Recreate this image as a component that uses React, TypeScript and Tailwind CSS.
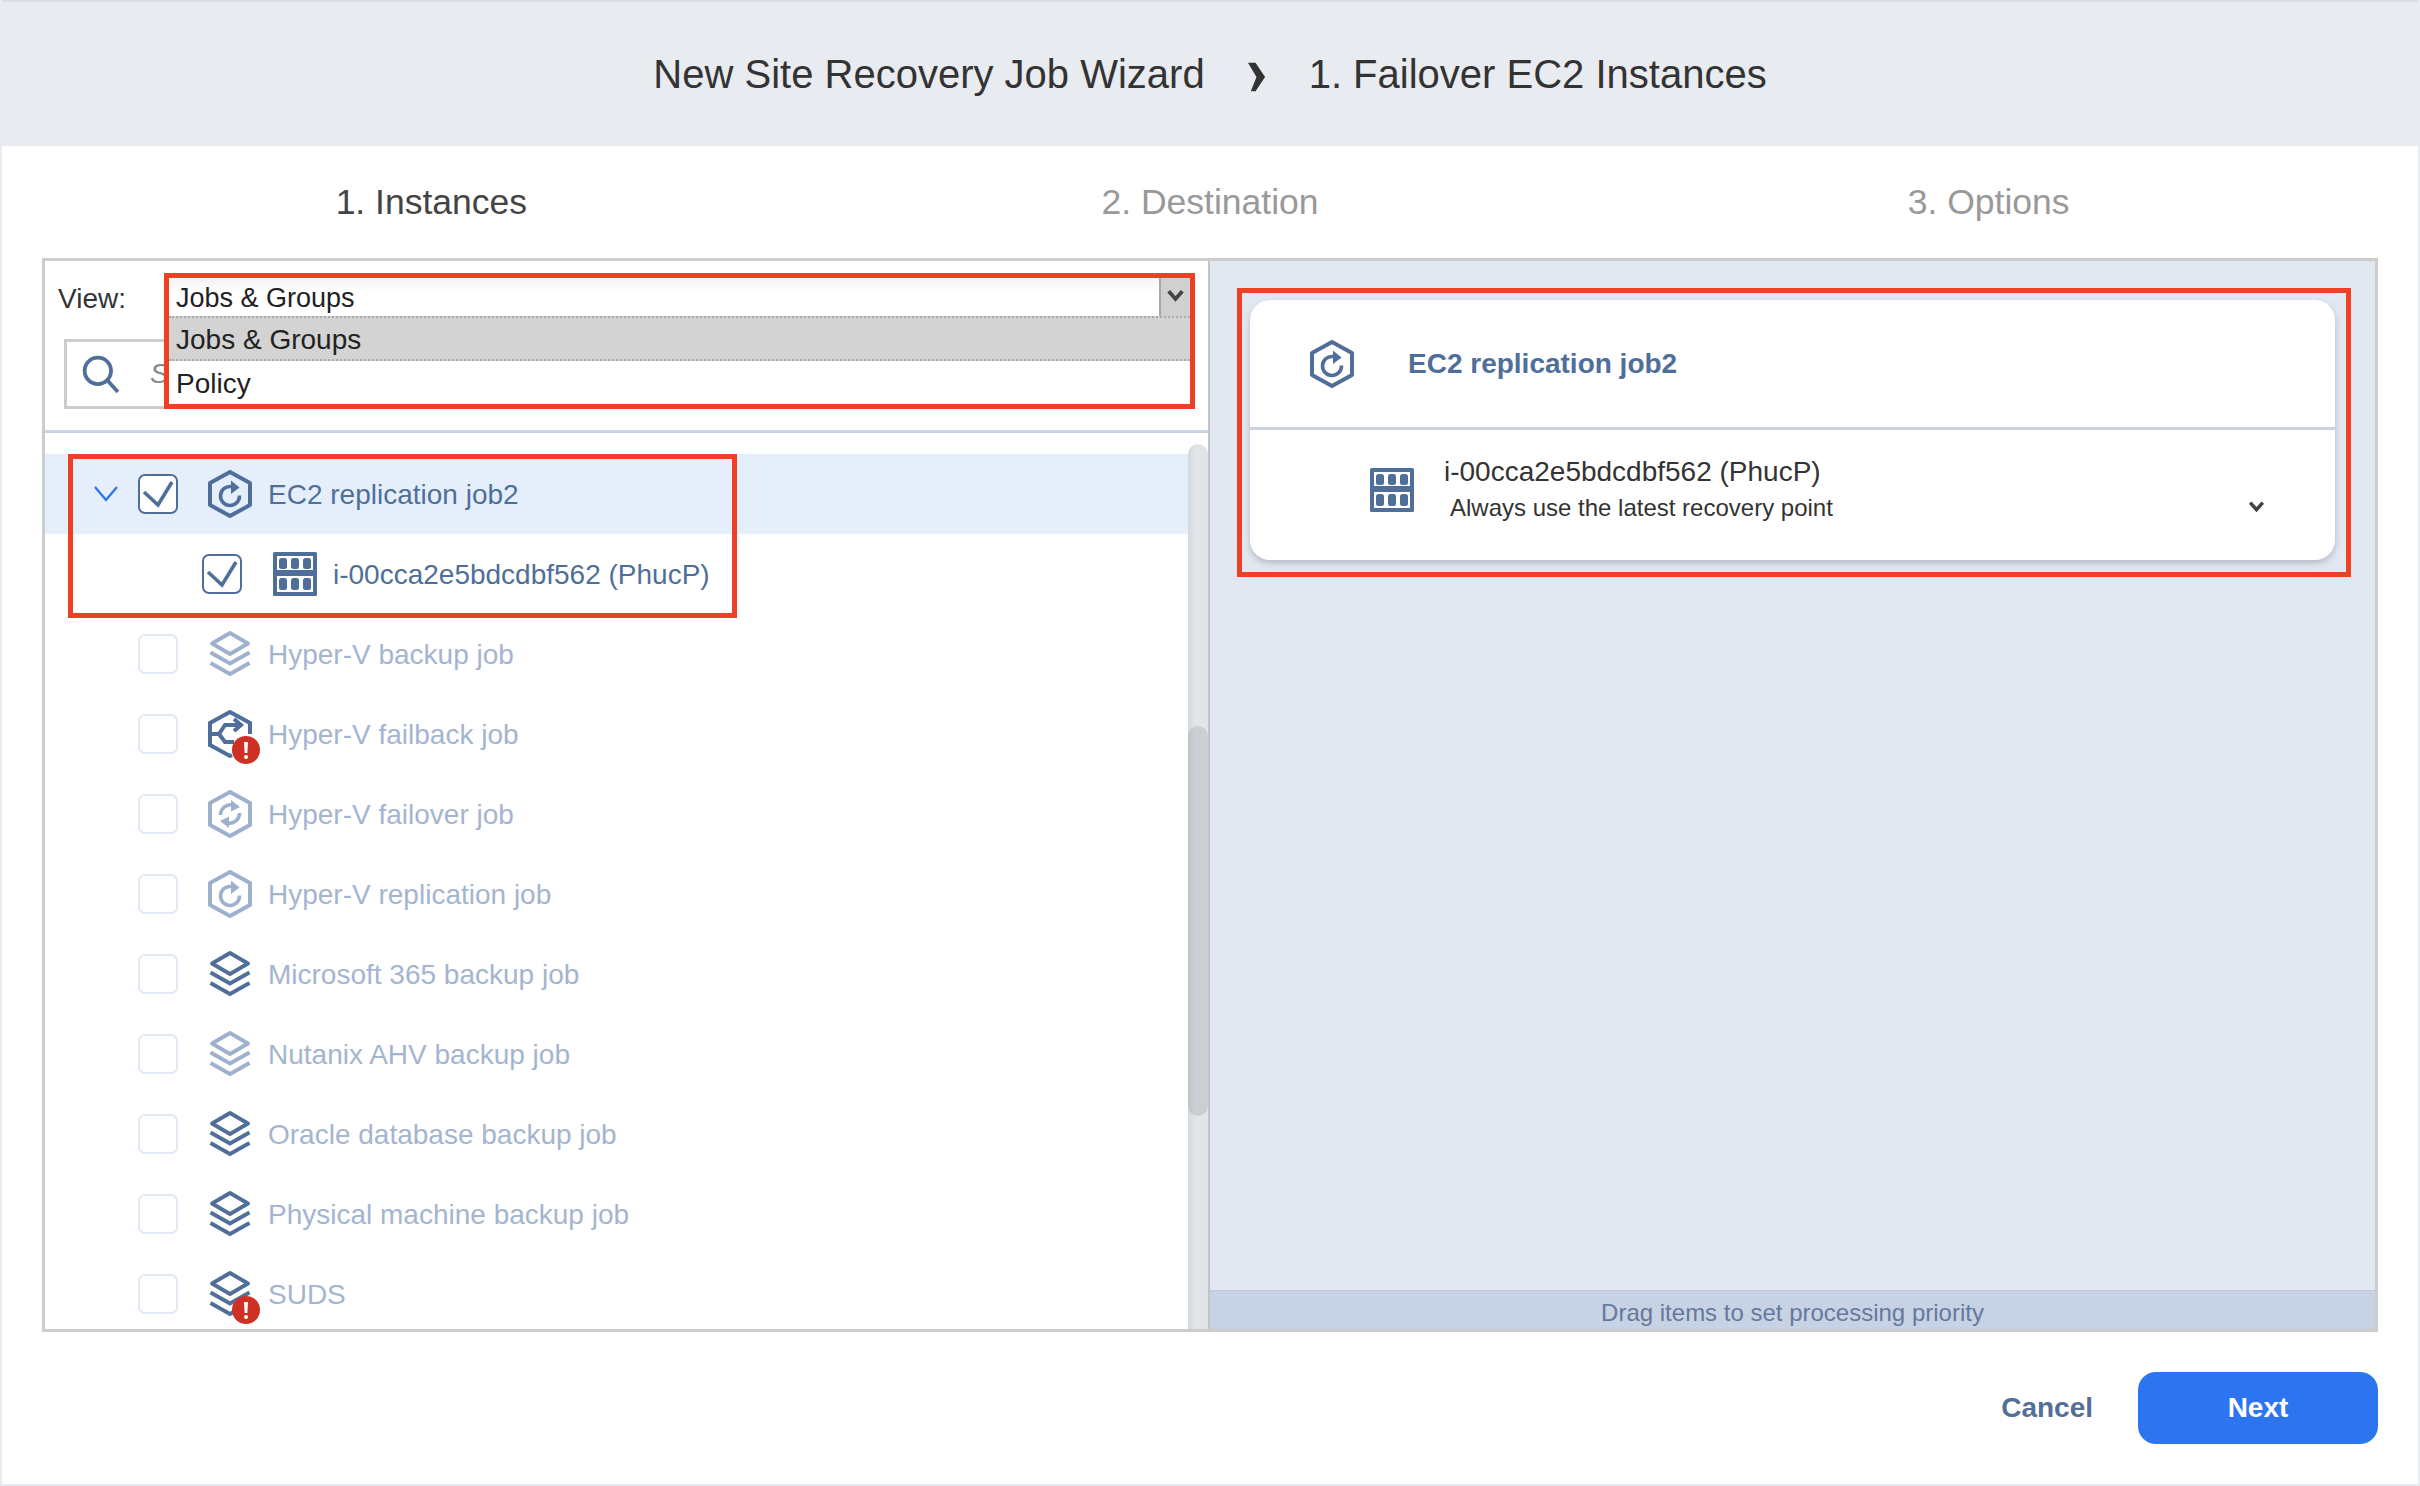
const DARK = "#4f6f9a";
const LIGHT = "#9db1cf";

type IconKind = "stack" | "replication" | "failover" | "failback";

type Job = { name: string; icon: IconKind; dim: boolean; alert?: boolean };

const JOBS: Job[] = [
  { name: "Hyper-V backup job", icon: "stack", dim: true },
  { name: "Hyper-V failback job", icon: "failback", dim: false, alert: true },
  { name: "Hyper-V failover job", icon: "failover", dim: true },
  { name: "Hyper-V replication job", icon: "replication", dim: true },
  { name: "Microsoft 365 backup job", icon: "stack", dim: false },
  { name: "Nutanix AHV backup job", icon: "stack", dim: true },
  { name: "Oracle database backup job", icon: "stack", dim: false },
  { name: "Physical machine backup job", icon: "stack", dim: false },
  { name: "SUDS", icon: "stack", dim: false, alert: true },
];

function JobIcon({ kind, color }: { kind: IconKind; color: string }) {
  if (kind === "stack") {
    return (
      <svg viewBox="0 0 44 48" className="h-[48px] w-[44px]" fill="none" stroke={color} strokeWidth="3.8">
        <path d="M22 3 L40 13.5 L22 24 L4 13.5 Z" strokeLinejoin="round" />
        <path d="M2.5 22.5 L22 33.5 L41.5 22.5" />
        <path d="M2.5 33 L22 44 L41.5 33" />
      </svg>
    );
  }
  return (
    <svg viewBox="0 0 44 48" className="h-[48px] w-[44px]" fill="none" stroke={color} strokeWidth="4">
      {kind === "failback" ? (
        <>
          <path d="M24 45 L22 46 L2 35 V13 L22 2 L42 13 V24" />
          <path d="M2 24 H11 L17 15 H31" />
          <path d="M11 24 L17 32 H26" />
          <path d="M26 9 L33 15 L26 21" />
        </>
      ) : (
        <path d="M22 2 L42 13 V35 L22 46 L2 35 V13 Z" strokeLinejoin="round" />
      )}
      {kind === "replication" && (
        <>
          <path d="M23 16.5 A9.5 9.5 0 1 0 31.5 25.5" strokeWidth="3.6" />
          <path d="M23 10.5 L31.5 17.5 L23 24 Z" fill={color} stroke="none" />
        </>
      )}
      {kind === "failover" && (
        <>
          <path d="M12.5 25 A10 10 0 0 1 26 15.5" strokeWidth="3.6" />
          <path d="M23 10 L32 17 L23 21.5 Z" fill={color} stroke="none" />
          <path d="M31.5 23 A10 10 0 0 1 18 32.5" strokeWidth="3.6" />
          <path d="M21 38 L12 31 L21 26.5 Z" fill={color} stroke="none" />
        </>
      )}
    </svg>
  );
}

function ServerIcon() {
  return (
    <svg viewBox="0 0 44 44" className="h-[44px] w-[44px] shrink-0">
      <rect width="44" height="44" rx="1.5" fill={DARK} />
      <rect x="4" y="4" width="36" height="14" fill="#fff" />
      <rect x="4" y="24" width="36" height="16" fill="#fff" />
      {[6, 18, 30].map((x) => (
        <g key={x} fill={DARK}>
          <rect x={x} y="6" width="8" height="11" rx="2.5" />
          <rect x={x} y="26" width="8" height="12" rx="2.5" />
        </g>
      ))}
    </svg>
  );
}

function AlertBadge() {
  return (
    <span className="absolute left-[24px] top-[26px] flex h-[28px] w-[28px] items-center justify-center rounded-full bg-[#cf3024]">
      <svg viewBox="0 0 28 28" className="h-[28px] w-[28px]" fill="#fff">
        <path d="M12 6 H16 L15.3 17 H12.7 Z" />
        <circle cx="14" cy="21" r="2" />
      </svg>
    </span>
  );
}

function CheckBox({ checked }: { checked: boolean }) {
  if (!checked) {
    return <span className="block h-[40px] w-[40px] shrink-0 rounded-[7px] border-2 border-[#e2e8f4] bg-white" />;
  }
  return (
    <span className="flex h-[40px] w-[40px] shrink-0 items-center justify-center rounded-[7px] border-2 border-[#4f6f9a] bg-white">
      <svg viewBox="0 0 36 36" className="h-[36px] w-[36px]" fill="none" stroke={DARK} strokeWidth="3.6">
        <path d="M4 16 L18 29 L32 6" />
      </svg>
    </span>
  );
}

function JobRow({ job }: { job: Job }) {
  return (
    <div className="flex h-[80px] shrink-0 items-center pl-[93px]">
      <CheckBox checked={false} />
      <span className="relative ml-[30px] h-[48px] w-[44px] shrink-0">
        <JobIcon kind={job.icon} color={job.dim ? LIGHT : DARK} />
        {job.alert && <AlertBadge />}
      </span>
      <span className="ml-[16px] pt-[1px] text-[28px] text-[#a3b5d0]">{job.name}</span>
    </div>
  );
}

function Highlight({ className }: { className: string }) {
  return <div className={`pointer-events-none absolute border-[5px] border-[#ee4025] ${className}`} />;
}

function Chevron({ className }: { className: string }) {
  return (
    <svg viewBox="0 0 20 14" className={className} fill="none" stroke="currentColor" strokeWidth="4.5">
      <path d="M2 2 L10 11 L18 2" />
    </svg>
  );
}

export default function App() {
  return (
    <div className="flex h-[1486px] w-[2420px] flex-col border-x-2 border-b-2 border-x-[#e8ebf0] border-b-[#e8ebf0] bg-white font-['Liberation_Sans',Arial,sans-serif] text-[#333]">
      <header className="flex h-[146px] shrink-0 items-center justify-center border-t-2 border-[#dcdfe3] bg-[#e8ebf0] text-[40px] text-[#333]">
        <span>New Site Recovery Job Wizard</span>
        <svg viewBox="0 0 20 30" className="ml-[42px] mr-[43px] mt-[6px] h-[30px] w-[19px]" fill="#333">
          <path d="M1 0 H9 L19 15 L9 30 H4 L10 15 Z" />
        </svg>
        <span>1. Failover EC2 Instances</span>
      </header>

      <nav className="mx-[40px] flex h-[112px] shrink-0 items-center pt-[1px] text-[35.5px] text-[#999]">
        <div className="flex-1 text-center text-[#444]">1. Instances</div>
        <div className="flex-1 text-center">2. Destination</div>
        <div className="flex-1 text-center">3. Options</div>
      </nav>

      <main className="relative mx-[40px] flex h-[1074px] border-[3px] border-[#cccccc]">
        <section className="flex w-[1165px] shrink-0 flex-col border-r-2 border-[#c4c4c4]">
          <div className="relative h-[172px] shrink-0 border-b-[3px] border-[#c8d3e3]">
            <span className="absolute left-[13px] top-[20px] text-[28px] leading-[36px] text-[#333]">View:</span>
            <div className="absolute left-[19px] top-[78px] flex h-[70px] w-[1124px] items-center border-[3px] border-[#cccccc] pl-[15px]">
              <svg viewBox="0 0 36 36" className="h-[38px] w-[38px]" fill="none" stroke={DARK} strokeWidth="3.6">
                <circle cx="15" cy="15" r="12.5" />
                <path d="M24 24 L34 35" />
              </svg>
              <span className="ml-[30px] text-[28px] italic text-[#888]">Search</span>
            </div>
            <div className="absolute left-[124px] top-[17px] w-[1021px] bg-white text-[#222]">
              <div className="flex h-[38px] items-center bg-gradient-to-b from-[#f3f3f3] to-white to-40% pl-[7px] pt-[2px] text-[27px]">
                <span className="flex-1">Jobs &amp; Groups</span>
                <span className="-mt-[2px] flex h-[38px] w-[31px] items-start justify-center border-l-2 border-[#a8a8a8] bg-[#d0d0d0] pt-[11px] text-[#444]">
                  <Chevron className="h-[13px] w-[17px]" />
                </span>
              </div>
              <div className="flex h-[45px] items-center border-y-2 border-dotted border-[#a9a9a9] bg-[#d3d3d3] pl-[7px] pt-[2px] text-[28px]">Jobs &amp; Groups</div>
              <div className="flex h-[43px] items-center pl-[7px] pt-[2px] text-[28px]">Policy</div>
            </div>
          </div>

          <div className="flex min-h-0 flex-1">
            <div className="min-w-0 flex-1 overflow-hidden pt-[21px]">
              <div className="flex h-[80px] items-center bg-[#e5effb] pl-[49px]">
                <svg viewBox="0 0 24 16" className="h-[16px] w-[24px]" fill="none" stroke="#2f74f0" strokeWidth="2.4">
                  <path d="M1 1 L12 14 L23 1" />
                </svg>
                <span className="ml-[20px]"><CheckBox checked /></span>
                <span className="ml-[30px]"><JobIcon kind="replication" color={DARK} /></span>
                <span className="ml-[16px] pt-[1px] text-[28px] text-[#4f6f9a]">EC2 replication job2</span>
              </div>
              <div className="flex h-[80px] items-center pl-[157px]">
                <CheckBox checked />
                <span className="ml-[31px]"><ServerIcon /></span>
                <span className="ml-[16px] pt-[1px] text-[28px] text-[#4f6f9a]">i-00cca2e5bdcdbf562 (PhucP)</span>
              </div>
              {JOBS.map((job) => (
                <JobRow key={job.name} job={job} />
              ))}
            </div>
            <div className="mt-[11px] w-[20px] shrink-0 overflow-hidden rounded-t-[10px] bg-gradient-to-r from-[#d5d8dd] to-[#e1e4e9] to-40%">
              <div className="mt-[282px] h-[390px] w-[20px] rounded-[10px] bg-gradient-to-r from-[#c1c3c7] to-[#cbced3] to-40%" />
            </div>
          </div>
        </section>

        <section className="flex min-w-0 flex-1 flex-col bg-[#e2e8f2]">
          <div className="flex-1 pl-[40px] pr-[40px] pt-[39px]">
            <div className="h-[260px] rounded-[20px] bg-white shadow-[0_3px_6px_rgba(90,100,120,0.35)]">
              <div className="flex h-[130px] items-center border-b-[3px] border-[#c8d3e3] pl-[60px]">
                <JobIcon kind="replication" color={DARK} />
                <span className="ml-[54px] pt-[1px] text-[28px] font-bold text-[#4f6f9a]">EC2 replication job2</span>
              </div>
              <div className="flex h-[130px] items-start pl-[120px] pr-[69px] pt-[24px]">
                <span className="mt-[14px]"><ServerIcon /></span>
                <div className="ml-[30px] min-w-0 flex-1">
                  <div className="text-[28px] leading-[36px] text-[#333]">i-00cca2e5bdcdbf562 (PhucP)</div>
                  <div className="ml-[6px] text-[24px] leading-[36px] text-[#333]">Always use the latest recovery point</div>
                </div>
                <Chevron className="mt-[47px] h-[11px] w-[19px] text-[#444]" />
              </div>
            </div>
          </div>
          <div className="flex h-[39px] shrink-0 items-center justify-center border-t border-dotted border-[#b9c0cc] bg-[#c7d2e4] pt-[6px] text-[24px] text-[#66799b]">
            Drag items to set processing priority
          </div>
        </section>

        <Highlight className="left-[119px] top-[12px] h-[136px] w-[1031px]" />
        <Highlight className="left-[23px] top-[193px] h-[164px] w-[669px]" />
        <Highlight className="left-[1192px] top-[27px] h-[289px] w-[1114px]" />
      </main>

      <footer className="mx-[40px] mt-[40px] flex items-center justify-end">
        <button className="mr-[45px] text-[28px] font-bold text-[#546f96]">Cancel</button>
        <button className="h-[72px] w-[240px] rounded-[18px] bg-[#2d74f0] text-[28px] font-bold text-white">Next</button>
      </footer>
    </div>
  );
}
